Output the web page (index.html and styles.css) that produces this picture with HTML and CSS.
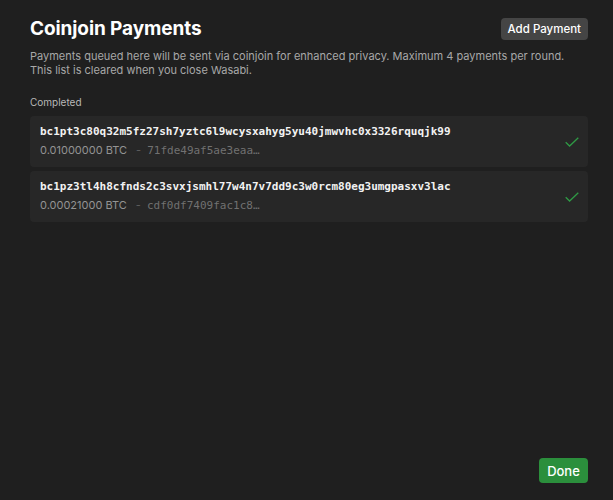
FILE: index.html
```html
<html>
  <head>
    <link rel="stylesheet" href="styles.css">
  </head>
  <body>
    <div class="dialog">
      <div class="header">
        <h1 class="title">Coinjoin Payments</h1>
        <button class="btn-add">Add Payment</button>
      </div>
      <p class="desc">Payments queued here will be sent via coinjoin for enhanced privacy. Maximum 4 payments per round.<br>This list is cleared when you close Wasabi.</p>

      <div class="section-label">Completed</div>
      <ul class="payments">
        <li class="payment">
          <div class="info">
            <div class="address">bc1pt3c80q32m5fz27sh7yztc6l9wcysxahyg5yu40jmwvhc0x3326rquqjk99</div>
            <div class="meta"><span class="amount">0.01000000 BTC</span><span class="sep">-</span><span class="txid">71fde49af5ae3eaa…</span></div>
          </div>
          <svg class="check" width="14" height="10" viewBox="0 0 14 10"><path d="M0.7 5.2 L4.6 9 L13.3 0.7" fill="none" stroke="#2f9a45" stroke-width="1.3"/></svg>
        </li>
        <li class="payment">
          <div class="info">
            <div class="address">bc1pz3tl4h8cfnds2c3svxjsmhl77w4n7v7dd9c3w0rcm80eg3umgpasxv3lac</div>
            <div class="meta"><span class="amount">0.00021000 BTC</span><span class="sep">-</span><span class="txid">cdf0df7409fac1c8…</span></div>
          </div>
          <svg class="check" width="14" height="10" viewBox="0 0 14 10"><path d="M0.7 5.2 L4.6 9 L13.3 0.7" fill="none" stroke="#2f9a45" stroke-width="1.3"/></svg>
        </li>
      </ul>

      <div class="footer">
        <button class="btn-done">Done</button>
      </div>
    </div>
  </body>
</html>
```

FILE: styles.css
```css
html, body {
  margin: 0;
  height: 100%;
  background: #1f1f1f;
  font-family: Inter, "Noto Sans", sans-serif;
  color: #fff;
}

.dialog {
  height: 100%;
  box-sizing: border-box;
  padding: 17px 25px 17px 30px;
  display: flex;
  flex-direction: column;
}

.header {
  display: flex;
  justify-content: space-between;
  align-items: center;
}

.title {
  margin: 0;
  font-size: 19px;
  font-weight: 700;
  letter-spacing: -0.1px;
}

.btn-add {
  background: #454545;
  border: none;
  border-radius: 4px;
  color: #fff;
  font-family: inherit;
  font-size: 11.5px;
  font-weight: 500;
  height: 22px;
  padding: 0 7px;
}

.desc {
  margin: 9px 0 0;
  font-size: 11px;
  line-height: 14px;
  color: #a8a8a8;
}

.section-label {
  margin-top: 19px;
  font-size: 10px;
  color: #b8b8b8;
}

.payments {
  list-style: none;
  margin: 8px 0 0;
  padding: 0;
  display: flex;
  flex-direction: column;
  gap: 4px;
}

.payment {
  background: #272727;
  border-radius: 4px;
  height: 51px;
  box-sizing: border-box;
  padding: 0 9px 0 10px;
  display: flex;
  align-items: center;
  justify-content: space-between;
}

.address {
  font-family: "DejaVu Sans Mono", monospace;
  font-size: 11px;
  font-weight: 700;
  color: #f2f2f2;
  line-height: 14px;
}

.meta {
  margin-top: 4px;
  font-size: 11px;
  line-height: 14px;
  display: flex;
  align-items: baseline;
}

.amount {
  color: #939393;
}

.sep {
  color: #5e5e5e;
  margin: 0 6px 0 9px;
}

.txid {
  font-family: "DejaVu Sans Mono", monospace;
  font-size: 11px;
  color: #717171;
}

.footer {
  margin-top: auto;
  display: flex;
  justify-content: flex-end;
}

.btn-done {
  background: #2b8f3c;
  border: none;
  border-radius: 4px;
  color: #fff;
  font-family: inherit;
  font-size: 13px;
  font-weight: 500;
  height: 25px;
  width: 49px;
  padding: 0;
}
```
